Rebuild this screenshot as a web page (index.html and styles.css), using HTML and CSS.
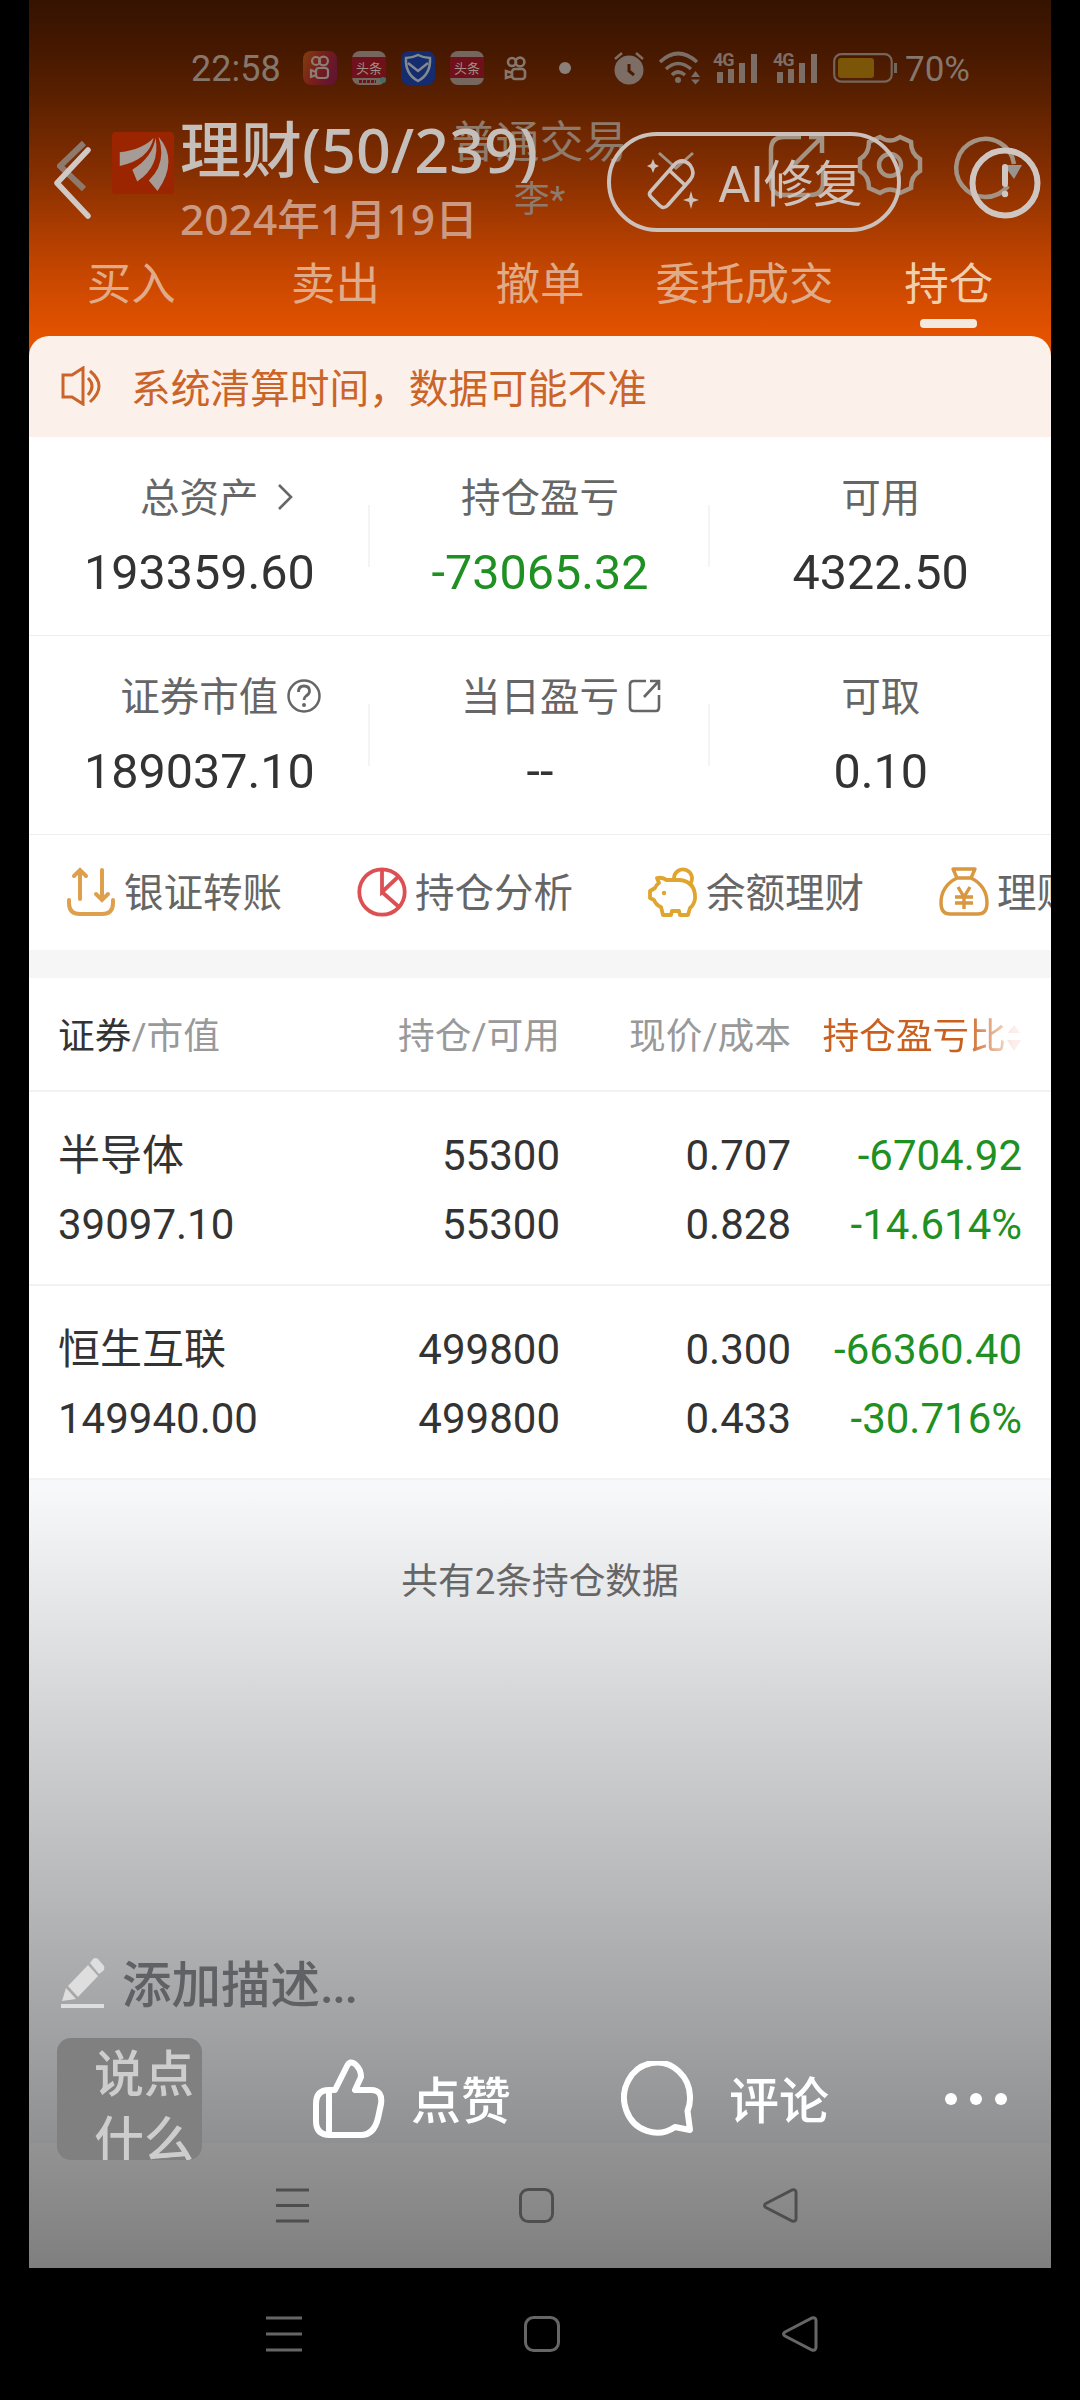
FILE: index.html
```
<!DOCTYPE html>
<html lang="zh-CN">
<head>
  <meta charset="UTF-8">
  <title>理财</title>
  <meta name="viewport" content="width=device-width, initial-scale=1.0"/>
  <link rel="stylesheet" href="styles.css">
</head>
<body>

  <div class="photo">
    <header class="top">
      <div class="status">
        <span class="time">22:58</span>
        <svg class="app" viewBox="0 0 34 34">
          <defs><linearGradient id="ks" x1="0" y1="0" x2="1" y2="0.4"><stop offset="0" stop-color="#804010"/><stop offset="0.5" stop-color="#7a2018"/><stop offset="1" stop-color="#64152f"/></linearGradient></defs>
          <rect width="34" height="34" rx="8" fill="url(#ks)"/>
          <g fill="none" stroke="#8b7d74" stroke-width="2.2"><circle cx="13" cy="10" r="4"/><circle cx="20.500" cy="10" r="4.4"/><rect x="13" y="17" width="12" height="10" rx="3"/><path d="M13 21l-5-2v7l5-2"/></g>
        </svg>
        <svg class="app" viewBox="0 0 34 34">
          <rect width="34" height="34" rx="8" fill="#75675e"/><rect y="6" width="34" height="21" fill="#70101a"/>
          <text x="17" y="21.500" class="tt">头条</text><path d="M7 30.500h17" stroke="#70101a" stroke-width="3" stroke-dasharray="3 1"/><circle cx="31" cy="29" r="3" fill="#3f7067"/>
        </svg>
        <svg class="app" viewBox="0 0 34 34">
          <rect width="34" height="34" rx="8" fill="#142c70"/>
          <path d="M17 4q6 3 12 3q1 16-12 23Q4 23 5 7q6 0 12-3zM7 12l10 8 10-8" fill="none" stroke="#83898c" stroke-width="2.500"/>
        </svg>
        <svg class="app" viewBox="0 0 34 34">
          <rect width="34" height="34" rx="8" fill="#75675e"/><rect y="6" width="34" height="21" fill="#70101a"/>
          <text x="17" y="21.500" class="tt">头条</text>
        </svg>
        <svg class="app" viewBox="0 0 34 34">
          <g fill="none" stroke="#85776c" stroke-width="2.600"><circle cx="13" cy="11" r="4"/><circle cx="21" cy="11" r="4.400"/><rect x="13" y="18" width="13" height="10" rx="3"/><path d="M13 22l-6-2v7l6-2"/></g>
        </svg>
        <i class="dot"></i>
        <svg class="alarm" viewBox="0 0 30 34">
          <circle cx="15" cy="19" r="14.500" fill="#7d6e65"/><path d="M1 8l7-6M29 8l-7-6" stroke="#7d6e65" stroke-width="2.500"/><path d="M15 13v7l5 4" fill="none" stroke="#4a1a02" stroke-width="3"/>
        </svg>
        <svg class="wifi" viewBox="0 0 42 34">
          <g fill="none" stroke="#7d6e65" stroke-width="3.600"><path d="M1 11q18-17 37 0M7 18q12-11 25 0M13 24q6-6 13 0"/></g><circle cx="19" cy="29" r="3" fill="#7d6e65"/><path d="M32 26l4.500-6 4.500 6zM32 28.500h9l-4.500 5z" fill="#7d6e65"/>
        </svg>
        <svg class="signal" viewBox="0 0 45 34"><text x="0" y="15" class="net">4G</text><path d="M7 21v11M18 18v14M29 12v20M41 3v29" stroke="#7d6e65" stroke-width="6"/></svg>
        <svg class="signal" viewBox="0 0 45 34"><text x="0" y="15" class="net">4G</text><path d="M7 21v11M18 18v14M29 12v20M41 3v29" stroke="#7d6e65" stroke-width="6"/></svg>
        <svg class="battery" viewBox="0 0 64 30">
          <rect x="1.200" y="1.200" width="57.500" height="27.500" rx="7" fill="none" stroke="#75655a" stroke-width="2.200"/><rect x="5" y="5" width="36" height="20" rx="3" fill="#7b5608"/><path d="M62.500 10v10" stroke="#75655a" stroke-width="3"/>
        </svg>
        <span class="percent">70%</span>
      </div>

      <div class="account">
        <svg class="ghost-back" viewBox="0 0 30 52"><path d="M27 3L3 26l24 23" fill="none" stroke="#8d7a6c" stroke-width="6"/></svg>
        <svg class="brand" viewBox="0 0 64 64">
          <rect width="64" height="64" rx="4" fill="#9b2500"/>
          <g fill="#a69c95"><path d="M43 6Q38 29 8 35V21Q32 18 43 6z"/><path d="M45 6Q50 36 26 51l-5-12Q42 26 45 6z"/><path d="M48 5Q69 29 47 61l-9-11Q57 32 48 5z"/></g>
        </svg>
        <div class="market">
          <div class="market-name">普通交易</div>
          <div class="owner">李*</div>
        </div>
        <svg class="tools" viewBox="0 0 400 90">
          <g fill="none" stroke="#a49283" stroke-width="4.500">
            <path d="M8 29l17 15 17-15" stroke-width="3"/>
            <path d="M150 13h-17q-13 0-13 13v32q0 13 13 13h26q13 0 13-13V41M158 13h13v16M171 13L138 46"/>
            <circle cx="239" cy="41" r="11"/>
            <path d="M229 13q10 7 20 0l11 5q0 12 9 17v12q-9 5-9 17l-11 5q-10-7-20 0l-11-5q0-12-9-17V35q9-5 9-17z"/>
            <path d="M357 62A29 29 0 1 1 363 40"/>
          </g>
          <path d="M353 41h18l-8 14z" fill="#989490"/>
        </svg>
      </div>

      <nav class="tabs">
        <span>买入</span><span>卖出</span><span>撤单</span><span>委托成交</span><span class="active">持仓</span>
      </nav>
    </header>

    <div class="notice-wrap">
      <div class="notice">
        <svg viewBox="0 0 40 40"><path d="M2 9h9L22 2v36l-11-7H2z M27 12q8 8 0 17M29 5q18 15 0 31" fill="none" stroke="#cb6428" stroke-width="3"/></svg>
        <span>系统清算时间，数据可能不准</span>
      </div>
    </div>

    <section class="summary">
      <div class="cell">
        <div class="label">总资产<svg class="more" viewBox="0 0 18 28"><path d="M3 2l12 12L3 26" fill="none" stroke="#666" stroke-width="2.600"/></svg></div>
        <div class="value">193359.60</div>
      </div>
      <div class="cell">
        <div class="label">持仓盈亏</div>
        <div class="value down">-73065.32</div>
      </div>
      <div class="cell">
        <div class="label">可用</div>
        <div class="value">4322.50</div>
      </div>
    </section>
    <section class="summary">
      <div class="cell">
        <div class="label">证券市值<svg class="hint" viewBox="0 0 34 34"><circle cx="17" cy="17" r="15.500" fill="none" stroke="#666" stroke-width="2.500"/><path d="M11.500 13q0-6 5.500-6t5.500 5q0 3-3.500 5-2 1.500-2 4" fill="none" stroke="#666" stroke-width="2.800"/><circle cx="17" cy="26" r="2" fill="#666"/></svg></div>
        <div class="value">189037.10</div>
      </div>
      <div class="cell">
        <div class="label">当日盈亏<svg class="hint" viewBox="0 0 34 34"><path d="M18 2H6Q2 2 2 6v22q0 4 4 4h22q3 0 3-4V16M22 2h9v9M31 2L16 18" fill="none" stroke="#666" stroke-width="2.600"/></svg></div>
        <div class="value">--</div>
      </div>
      <div class="cell">
        <div class="label">可取</div>
        <div class="value">0.10</div>
      </div>
    </section>

    <section class="actions">
      <div class="action">
        <svg viewBox="0 0 50 50"><g fill="none" stroke="#dea04c" stroke-width="4" stroke-linecap="round"><path d="M3 33v3q0 11 11 11h22q11 0 11-11v-3M14 32V4M8 9l6-6 6 6M36 3v29M30 27l6 6 6-6"/></g></svg>
        <span>银证转账</span>
      </div>
      <div class="action">
        <svg viewBox="0 0 50 50"><g fill="none" stroke="#dc5054" stroke-width="3.800"><circle cx="25" cy="25" r="22.700"/><path d="M25 2v23L42 9M25 25l17 15"/></g></svg>
        <span>持仓分析</span>
      </div>
      <div class="action">
        <svg viewBox="0 0 50 50"><g fill="none" stroke="#e0a52e" stroke-width="3.800" stroke-linejoin="round"><path d="M9 11q6-1 9 2h14q16 2 15 19-1 6-5 9l-2 7h-8l-1-4h-7l-1 4h-8l-2-8q-5-2-7-7l-4-2v-7l5-3q1-3 4-5z"/><path d="M26 11a9 9 0 1 1 16 6"/></g><circle cx="16" cy="26" r="2.200" fill="#e0a52e"/></svg>
        <span>余额理财</span>
      </div>
      <div class="action">
        <svg viewBox="0 0 50 50"><g fill="none" stroke="#d9973f" stroke-width="3.400" stroke-linejoin="round"><path d="M14 2h22l-4 9H18zM18 11Q2 19 2 36q0 11 9 11h28q9 0 9-11Q48 19 32 11"/><path d="M19 20l6 10 6-10M16 30h18M16 36h18M25 30v12"/></g></svg>
        <span>理财</span>
      </div>
    </section>

    <section class="holdings">
      <div class="row head">
        <div><b>证券</b>/市值</div>
        <div>持仓/可用</div>
        <div>现价/成本</div>
        <div class="sort">持仓盈亏比<svg viewBox="0 0 16 34"><path d="M2 13l6-8 6 8zM1 20h14l-7 11z" fill="#e98a7a"/></svg></div>
      </div>
      <div class="row">
        <div><span class="name">半导体</span><br>39097.10</div>
        <div>55300<br>55300</div>
        <div>0.707<br>0.828</div>
        <div class="down">-6704.92<br>-14.614%</div>
      </div>
      <div class="row">
        <div><span class="name">恒生互联</span><br>149940.00</div>
        <div>499800<br>499800</div>
        <div>0.300<br>0.433</div>
        <div class="down">-66360.40<br>-30.716%</div>
      </div>
    </section>

    <div class="rest">共有2条持仓数据</div>

    <div class="inner-nav">
      <svg class="menu" viewBox="0 0 36 36"><path d="M1 2h34M1 18h34M1 34h34"/></svg>
      <svg class="home" viewBox="0 0 36 36"><rect x="1.500" y="1.500" width="33" height="33" rx="8"/></svg>
      <svg class="back" viewBox="0 0 36 36"><path d="M3 16L30 2q4-1 4 3v26q0 4-4 3L3 20q-3-2 0-4z"/></svg>
    </div>
  </div>

  <!-- viewer controls on top of the photo -->
  <div class="viewer-top">
    <svg class="viewer-back" viewBox="0 0 38 72"><path d="M35 3L4 36l31 33" fill="none" stroke="#d0c9c5" stroke-width="5.500" stroke-linecap="round" stroke-linejoin="round"/></svg>
    <div class="album">
      <div class="album-name">理财<span>(50/239)</span></div>
      <div class="album-date">2024年1月19日</div>
    </div>
    <div class="ai-fix">
      <svg viewBox="0 0 54 56"><g fill="none" stroke="#ccc1bb" stroke-width="3.600" stroke-linejoin="round"><path d="M4 37L27 11q8-8 16 0 6 8 0 15L21 51q-4 5-9 0l-8-8q-3-3 0-6zM22 16l17 16"/></g><path d="M6 5l2 5 4 2-4 2-2 5-2-5-4-2 4-2zM44 37l2 7 6 2-6 2-2 7-2-7-6-2 6-2z" fill="#ccc1bb"/></svg>
      <span>AI修复</span>
    </div>
    <svg class="info" viewBox="0 0 72 72"><circle cx="36" cy="36" r="32.500" fill="none" stroke="#cfc6c2" stroke-width="6"/><path d="M36 20v17" stroke="#cfc6c2" stroke-width="6" stroke-linecap="round"/><circle cx="36" cy="47" r="3.200" fill="#cfc6c2"/></svg>
  </div>

  <div class="viewer-bottom">
    <div class="describe">
      <svg viewBox="0 0 44 50"><path d="M29 5l3-4q2-2 5 0l6 7q1 3-1 5l-4 3zM27 7l10 11-20 21L7 28zM5 30l10 11-14 2z" fill="#dedede"/><path d="M0 48h43" stroke="#dedede" stroke-width="4"/></svg>
      <span>添加描述<span class="more-dots">...</span></span>
    </div>
    <div class="bar">
      <div class="say">说点什么</div>
      <div class="tool like">
        <svg viewBox="0 0 72 80"><g fill="none" stroke="#fff" stroke-width="6" stroke-linejoin="round"><path d="M3 45q0-14 13-14h6L34 7q3-6 8-2 6 5 6 13l-6 13h16q12 0 10 14l-3 14q-4 17-17 17H17Q3 76 3 62z"/><path d="M16 31v45"/></g></svg>
        <span>点赞</span>
      </div>
      <div class="tool comment">
        <svg viewBox="0 0 72 76"><path d="M66.500 50q2.500-6 2.500-12A33 35 0 1 0 54 66l15 3z" fill="none" stroke="#fff" stroke-width="6" stroke-linejoin="round"/></svg>
        <span>评论</span>
      </div>
      <div class="dots"><i></i><i></i><i></i></div>
    </div>
  </div>

  <div class="phone-nav">
    <svg class="menu" viewBox="0 0 36 36"><path d="M0 2h36M0 18h36M0 34h36"/></svg>
    <svg class="home" viewBox="0 0 36 36"><rect x="1.500" y="1.500" width="33" height="33" rx="8"/></svg>
    <svg class="back" viewBox="0 0 36 36"><path d="M3 16L30 2q4-1 4 3v26q0 4-4 3L3 20q-3-2 0-4z"/></svg>
  </div>

</body>
</html>
```

FILE: styles.css
```
* {
  box-sizing: border-box;
}
body {
  position: relative;
  margin: 0;
  width: 1080px;
  height: 2400px;
  overflow: hidden;
  background-color: #000;
  color: #333;
  font-family: Roboto, "Noto Sans CJK SC", sans-serif;
}
svg {
  display: block;
  flex: none;
}
.photo {
  display: flex;
  flex-direction: column;
  width: 1022px;
  height: 2268px;
  margin-left: 29px;
  overflow: hidden;
  background-color: #fff;
}

/* orange header */
.top {
  height: 336px;
  flex: none;
  background: linear-gradient(#351301 0, #461800 50px, #5c2100 100px, #8a3001 180px, #b54000 245px, #d44c00 300px, #e35200 336px);
}
.status {
  display: flex;
  align-items: center;
  height: 86px;
  padding: 50px 0 0 162px;
  color: #85776c;
  font-size: 36px;
}
.time {
  width: 112px;
  padding-top: 2px;
}
.percent {
  padding-top: 3px;
  font-size: 35px;
}
.app {
  width: 34px;
  height: 34px;
  margin-right: 15px;
}
.tt {
  font-size: 13px;
  text-anchor: middle;
  fill: #a09088;
}
.dot {
  width: 12px;
  height: 12px;
  margin: 0 43px 0 11px;
  border-radius: 50%;
  background-color: #8b8078;
}
.alarm {
  width: 30px;
  height: 34px;
  margin-right: 15px;
}
.wifi {
  width: 42px;
  height: 34px;
  margin-right: 12px;
}
.signal {
  width: 45px;
  height: 34px;
  margin-right: 15px;
  overflow: visible;
}
.net {
  font-size: 18px;
  font-weight: bold;
  fill: #7d6e65;
  letter-spacing: -1px;
}
.battery {
  width: 64px;
  height: 30px;
  margin-right: 8px;
}
.account {
  display: flex;
  height: 160px;
  padding-left: 28px;
}
.ghost-back {
  width: 30px;
  height: 52px;
  margin: 54px 25px 0 0;
}
.brand {
  width: 62px;
  height: 64px;
  margin-top: 45px;
}
.market {
  width: 440px;
  margin: 26px 0 0 146px;
  padding-left: 26px;
  text-align: center;
  color: #8e7b6c;
}
.market-name {
  font-size: 44px;
  line-height: 62px;
}
.owner {
  font-size: 36px;
  line-height: 52px;
}
.tools {
  width: 400px;
  height: 90px;
  margin: 38px 0 0 -82px;
}
.tabs {
  display: flex;
  height: 90px;
}
.tabs span {
  flex: 1;
  text-align: center;
  color: #e0ab88;
  font-size: 44.5px;
  line-height: 79px;
}
.tabs .active {
  color: #f0cfb0;
}
.tabs .active::after {
  content: "";
  display: block;
  width: 57px;
  height: 9px;
  margin: -6px auto 0;
  border-radius: 4px;
  background-color: #f4e9e0;
}

.notice-wrap {
  flex: none;
  background-color: #e35200;
}
.notice {
  display: flex;
  align-items: center;
  height: 101px;
  padding-left: 32px;
  border-radius: 20px 20px 0 0;
  background-color: #fcf0ea;
  color: #cb6428;
  font-size: 39.7px;
}
.notice svg {
  width: 40px;
  height: 40px;
  margin: 0 30px 2px 0;
}
.notice span {
  padding-bottom: 2px;
}

.summary {
  display: flex;
  flex: none;
  height: 199px;
  border-bottom: 1px solid #eee;
}
.cell {
  flex: 1;
  display: flex;
  flex-direction: column;
  align-items: center;
  padding-top: 32px;
  background: linear-gradient(#f4f4f4, #f4f4f4) right 68px / 2px 62px no-repeat;
}
.cell:last-child {
  background: none;
}
.label {
  position: relative;
  color: #666;
  font-size: 39.5px;
  line-height: 60px;
}
.label svg {
  position: absolute;
  left: 100%;
}
.more {
  top: 14px;
  width: 18px;
  height: 28px;
  margin-left: 17px;
}
.hint {
  top: 11px;
  width: 34px;
  height: 34px;
  margin-left: 9px;
}
.value {
  margin-top: 12px;
  font-size: 48.5px;
  line-height: 64px;
}
.down {
  color: #1f9022;
}

.actions {
  display: flex;
  flex: none;
  height: 143px;
  padding: 0 0 28px 37px;
  overflow: hidden;
  border-bottom: 28px solid #f6f6f7;
}
.action {
  display: flex;
  flex: none;
  width: 291px;
  padding-top: 32px;
  color: #666;
  font-size: 39.5px;
  line-height: 54px;
  white-space: nowrap;
}
.action svg {
  width: 50px;
  height: 50px;
  margin-right: 8px;
}

.holdings {
  flex: none;
}
.row {
  display: grid;
  grid-template-columns: 271px 231px 231px 231px;
  height: 194px;
  padding: 29px 29px 0 29px;
  border-bottom: 2px solid #f2f2f2;
  font-size: 42px;
  line-height: 69px;
  text-align: right;
}
.row div:first-child {
  text-align: left;
  white-space: nowrap;
}
.name {
  font-size: 42px;
}
.head {
  height: 114px;
  padding-top: 25px;
  color: #999;
  font-size: 36.7px;
  line-height: 68px;
}
.head b {
  color: #333;
  font-weight: normal;
}
.sort {
  display: flex;
  justify-content: flex-end;
  align-items: flex-start;
  color: #c9601f;
  white-space: nowrap;
  -webkit-mask-image: linear-gradient(90deg, #000 75%, rgba(0, 0, 0, 0.15) 96%);
  mask-image: linear-gradient(90deg, #000 75%, rgba(0, 0, 0, 0.15) 96%);
}
.sort svg {
  width: 16px;
  height: 34px;
  margin-top: 17px;
}

.rest {
  flex: 1;
  padding-top: 75px;
  background: linear-gradient(#f7f8fa 10px, #8f9092);
  color: #666;
  font-size: 36.7px;
  line-height: 54px;
  text-align: center;
}
.inner-nav {
  display: flex;
  flex: none;
  height: 125px;
  padding: 45px 0 0 246px;
  background: linear-gradient(#939393, #7f7f7f);
}
.inner-nav svg,
.phone-nav svg {
  fill: none;
  stroke-width: 3px;
}
.inner-nav svg {
  width: 35px;
  height: 35px;
  stroke: #4e4e4e;
}
.inner-nav .home {
  margin: 0 209px;
}

/* viewer controls */
.viewer-top {
  position: absolute;
  top: 0;
  left: 0;
  display: flex;
  width: 1080px;
  height: 250px;
  padding-left: 53px;
}
.viewer-back {
  width: 38px;
  height: 72px;
  margin-top: 147px;
}
.album {
  width: 427px;
  margin: 112px 0 0 89px;
  white-space: nowrap;
  font-family: "Noto Sans", "Noto Sans CJK SC", sans-serif;
  font-weight: 500;
}
.album-name {
  color: #c5bfbc;
  font-size: 61px;
  line-height: 76px;
}
.album-date {
  color: #cc9a83;
  font-size: 42.5px;
  line-height: 62px;
}
.ai-fix {
  display: flex;
  width: 294px;
  height: 100px;
  margin-top: 132px;
  padding: 18px 0 0 36px;
  border: 4px solid #cbc1bc;
  border-radius: 50px;
  color: #ccc1bb;
  font-size: 49.5px;
  line-height: 62px;
  white-space: nowrap;
}
.ai-fix svg {
  width: 54px;
  height: 56px;
  margin-right: 17px;
}
.info {
  width: 72px;
  height: 72px;
  margin: 147px 0 0 68px;
}
.viewer-bottom {
  position: absolute;
  top: 1945px;
  left: 57px;
  width: 966px;
}
.describe {
  display: flex;
  height: 78px;
  color: #5f6165;
  font-size: 49.5px;
  font-weight: 500;
  line-height: 83px;
}
.describe svg {
  width: 44px;
  height: 50px;
  margin: 13px 17px 0 4px;
}
.more-dots {
  letter-spacing: -1.5px;
}
.bar {
  display: flex;
  align-items: center;
  margin-top: 15px;
  color: #fff;
  font-size: 50px;
  font-weight: 500;
}
.say {
  width: 145px;
  height: 122px;
  padding: 4px 8px 0 37px;
  overflow: hidden;
  border-radius: 14px;
  background-color: #7f807f;
  color: #cdcdcd;
  font-size: 50px;
  font-weight: 500;
  line-height: 66px;
}
.tool {
  display: flex;
  align-items: center;
  line-height: 72px;
}
.tool span {
  padding-top: 5px;
}
.like {
  margin-left: 111px;
}
.like svg {
  width: 72px;
  height: 80px;
  margin-right: 26px;
}
.comment {
  margin-left: 110px;
}
.comment svg {
  width: 72px;
  height: 76px;
  margin-right: 36px;
}
.dots {
  display: flex;
  gap: 13px;
  margin-left: 116px;
}
.dots i {
  width: 12px;
  height: 12px;
  border-radius: 50%;
  background-color: #fff;
}
.phone-nav {
  display: flex;
  padding: 48px 0 0 266px;
}
.phone-nav svg {
  width: 36px;
  height: 36px;
  stroke: #666;
}
.phone-nav .home {
  margin: 0 222px;
}
```
